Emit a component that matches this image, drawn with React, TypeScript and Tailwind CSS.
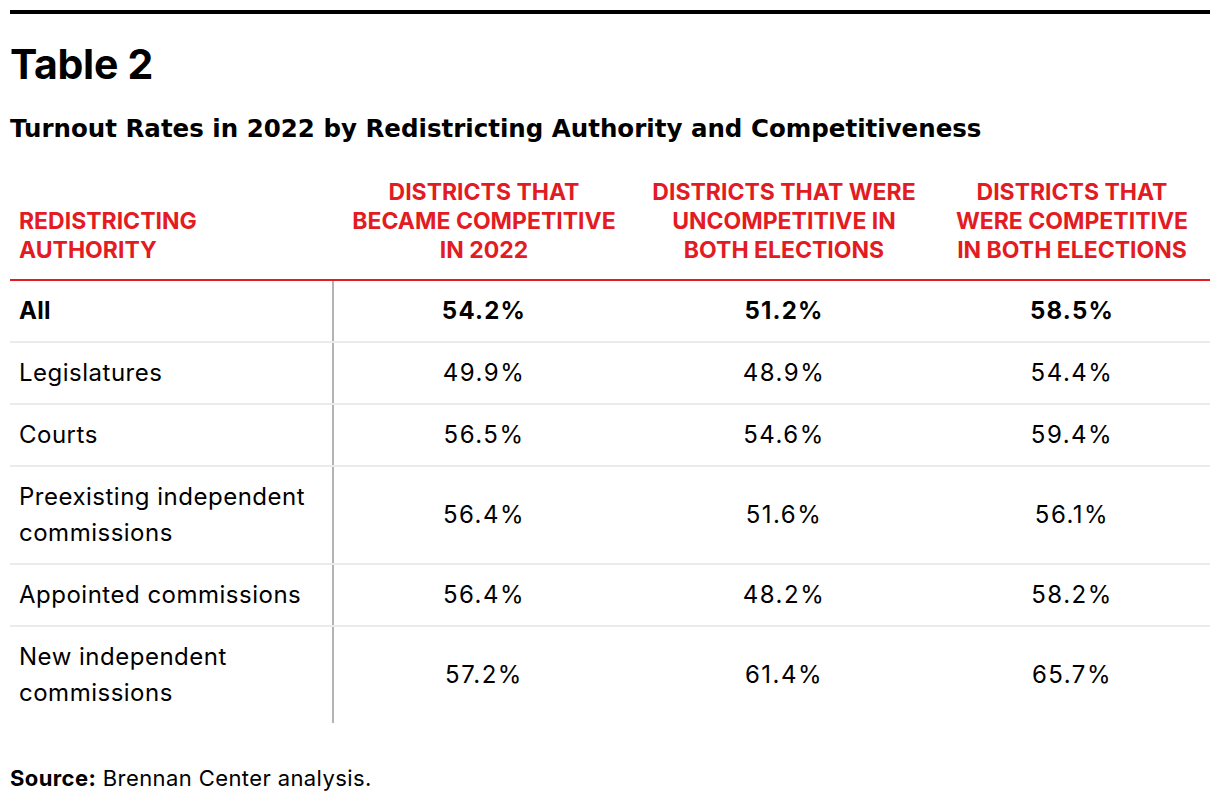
import React from "react";

const rows = [
  { name: "All", v: ["54.2%", "51.2%", "58.5%"], bold: true },
  { name: "Legislatures", v: ["49.9%", "48.9%", "54.4%"] },
  { name: "Courts", v: ["56.5%", "54.6%", "59.4%"] },
  { name: "Preexisting independent commissions", v: ["56.4%", "51.6%", "56.1%"] },
  { name: "Appointed commissions", v: ["56.4%", "48.2%", "58.2%"] },
  { name: "New independent commissions", v: ["57.2%", "61.4%", "65.7%"] },
];

const headers = [
  "DISTRICTS THAT BECAME COMPETITIVE IN 2022",
  "DISTRICTS THAT WERE UNCOMPETITIVE IN BOTH ELECTIONS",
  "DISTRICTS THAT WERE COMPETITIVE IN BOTH ELECTIONS",
];

export default function App() {
  const body = { fontFamily: "Inter, Roboto, sans-serif" };
  const sub = { fontFamily: "'DejaVu Sans', Inter, sans-serif" };
  return (
    <div className="w-[1220px] h-[808px] bg-white text-black px-[10px]" style={body}>
      <div className="pt-[10px]">
        <div className="h-[4px] bg-black w-[1200px]" />
      </div>
      <h1 className="mt-[26px] text-[41px] leading-[48px] font-bold tracking-[-0.3px]">Table 2</h1>
      <h2 className="mt-[25px] text-[24.5px] leading-[32px] font-bold" style={sub}>
        Turnout Rates in 2022 by Redistricting Authority and Competitiveness
      </h2>
      <div className="mt-[33px] w-[1200px]">
        <div className="grid grid-cols-[324px_300px_300px_276px] border-b-2 border-[#e31b23]">
          <div className="px-[9px] pb-[14px] flex items-end text-[#e31b23] font-bold text-[23px] leading-[29px]">
            REDISTRICTING<br />AUTHORITY
          </div>
          {headers.map((h, i) => (
            <div key={i} className="px-[14px] pb-[14px] flex items-end justify-center text-center text-[#e31b23] font-bold text-[23px] leading-[29px]">
              {h}
            </div>
          ))}
        </div>
        {rows.map((r, ri) => (
          <div
            key={ri}
            className={
              "grid grid-cols-[324px_300px_300px_276px] " +
              (ri < rows.length - 1 ? "border-b-2 border-[#ebebeb]" : "")
            }
          >
            <div
              className={
                "pl-[9px] pr-[20px] py-[12px] border-r-2 border-[#b3b3b3] text-[24px] leading-[36px] " +
                (r.bold ? "font-bold tracking-[0.3px]" : "font-normal tracking-[0.5px]")
              }
            >
              {r.name}
            </div>
            {r.v.map((v, vi) => (
              <div
                key={vi}
                className={
                  "flex items-center justify-center text-[24px] leading-[36px] " +
                  (r.bold ? "font-bold tracking-[1.2px]" : "font-normal tracking-[1.5px]")
                }
              >
                {v}
              </div>
            ))}
          </div>
        ))}
      </div>
      <p className="mt-[41px] text-[22px] leading-[28px] tracking-[0.4px]">
        <span className="font-bold">Source:</span> Brennan Center analysis.
      </p>
    </div>
  );
}
